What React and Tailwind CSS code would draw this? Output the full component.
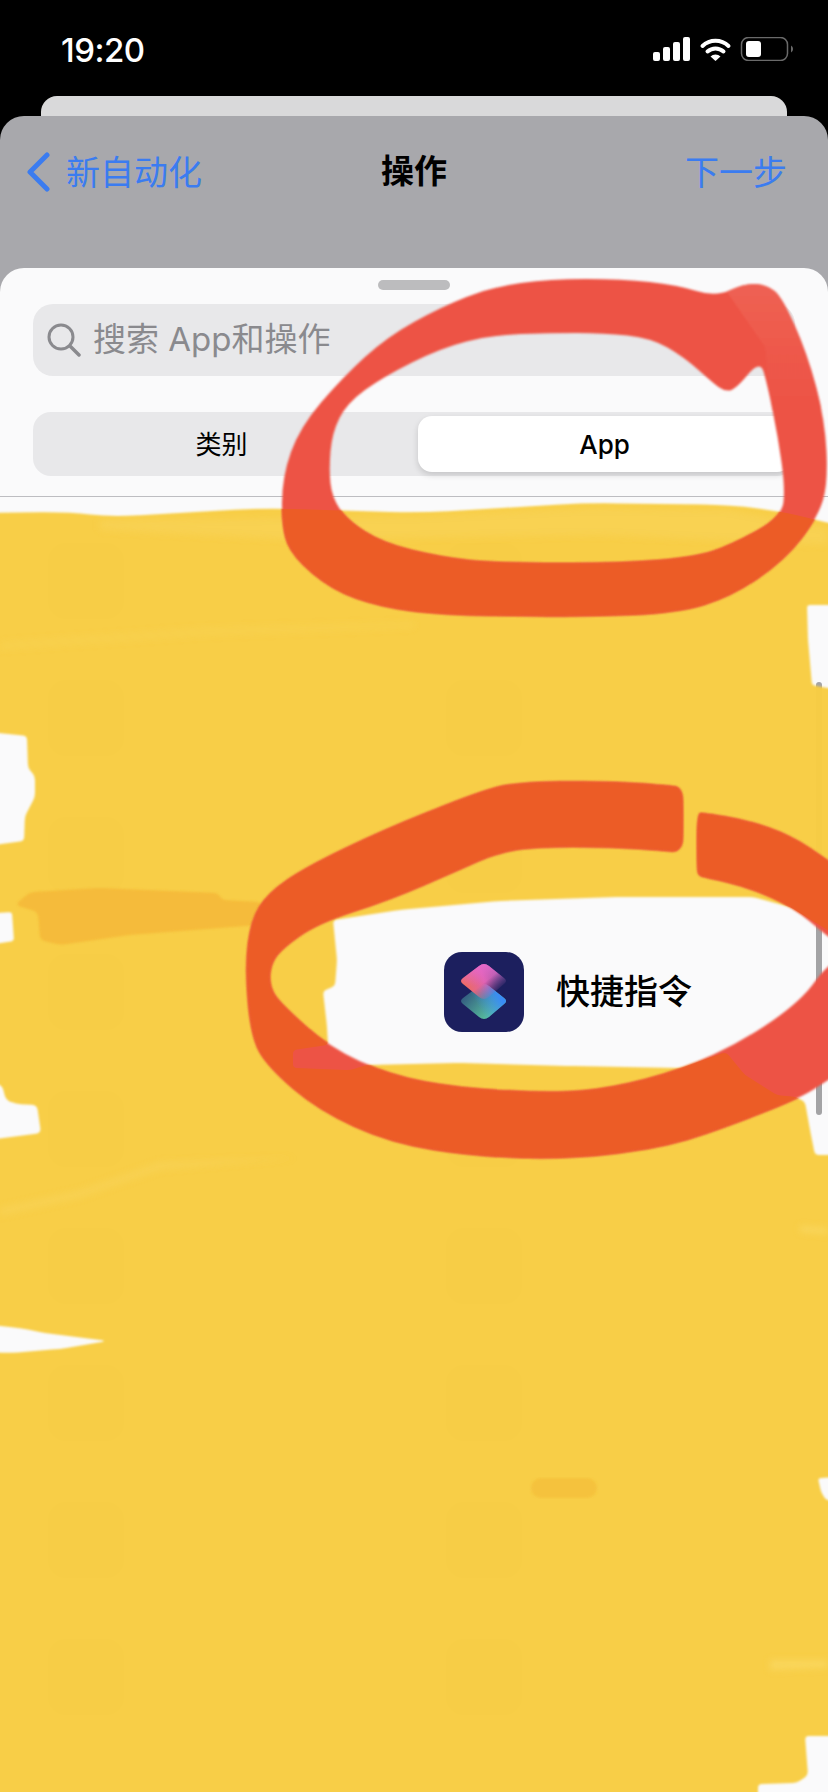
// rounded polygon through points, corner cut limited to r
function blob(points, r = 30) {
  const n = points.length;
  let d = '';
  points.forEach((p, i) => {
    const prev = points[(i - 1 + n) % n];
    const next = points[(i + 1) % n];
    const la = Math.hypot(prev[0] - p[0], prev[1] - p[1]);
    const lb = Math.hypot(next[0] - p[0], next[1] - p[1]);
    const ca = Math.min(r, la / 2) / la;
    const cb = Math.min(r, lb / 2) / lb;
    const a = [p[0] + (prev[0] - p[0]) * ca, p[1] + (prev[1] - p[1]) * ca];
    const b = [p[0] + (next[0] - p[0]) * cb, p[1] + (next[1] - p[1]) * cb];
    d += `${i === 0 ? 'M' : 'L'}${a[0].toFixed(1)} ${a[1].toFixed(1)}Q${p[0]} ${p[1]} ${b[0].toFixed(1)} ${b[1].toFixed(1)}`;
  });
  return d + 'Z';
}

const yellowPath = [
  blob([[-30, 513], [69, 512], [111, 517], [264, 508], [419, 513], [586, 503], [731, 505], [785, 512], [828, 523], [860, 530], [860, 1830], [-30, 1830]], 30),
  // holes where the sheet shows through
  blob([[-20, 731], [27, 736], [28, 768], [35, 776], [35, 797], [25, 816], [24, 841], [-20, 847]], 4),
  blob([[-20, 914], [12, 912], [14, 941], [-20, 946]], 3),
  blob([[-20, 1080], [2, 1085], [6, 1100], [16, 1104], [37, 1105], [41, 1133], [-20, 1141]], 5),
  blob([[-20, 1324], [20, 1328], [45, 1333], [108, 1341], [60, 1349], [10, 1353], [-20, 1352]], 8),
  blob([[807, 605], [850, 605], [850, 692], [822, 687], [812, 685], [808, 640]], 3),
  blob([[333, 920], [400, 910], [497, 901], [620, 897], [753, 897], [790, 907], [860, 950], [860, 1155], [815, 1155], [810, 1130], [805, 1102], [796, 1097], [777, 1095], [745, 1075], [726, 1052], [680, 1068], [570, 1066], [459, 1063], [367, 1065], [350, 1070], [293, 1068], [293, 1050], [328, 1045], [327, 1027], [323, 991], [335, 986], [337, 960]], 4),
  blob([[818, 1478], [860, 1476], [860, 1505], [826, 1500], [821, 1492]], 3),
  blob([[805, 1736], [860, 1736], [860, 1830], [758, 1830], [758, 1784], [797, 1783], [808, 1775]], 4),
].join(' ');

const ringTop = [
  blob([[282, 477], [282, 530], [293, 557], [332, 590], [380, 607], [441, 615], [586, 617], [677, 613], [731, 597], [785, 560], [818, 517], [828, 483], [825, 420], [807, 353], [782, 297], [767, 285], [745, 283], [716, 297], [677, 285], [622, 279], [550, 279], [492, 287], [441, 307], [387, 337], [343, 377], [300, 427]], 50),
  blob([[329, 470], [332, 497], [347, 520], [383, 543], [441, 557], [495, 563], [622, 563], [695, 557], [731, 545], [782, 517], [785, 487], [778, 437], [767, 383], [760, 360], [735, 390], [724, 391], [713, 383], [684, 357], [651, 338], [604, 333], [550, 333], [492, 335], [441, 348], [383, 377], [347, 403], [332, 433]], 50),
].join(' ');

const ringBottom = [
  blob([[674, 786], [611, 781], [516, 782], [478, 792], [383, 830], [306, 867], [268, 893], [251, 920], [245, 967], [251, 1037], [268, 1067], [318, 1110], [390, 1143], [478, 1157], [573, 1159], [669, 1147], [745, 1120], [802, 1097], [828, 1080], [860, 1060], [860, 950], [828, 963], [802, 1000], [745, 1040], [680, 1070], [611, 1088], [554, 1093], [459, 1088], [390, 1075], [329, 1047], [280, 1003], [270, 987], [270, 967], [280, 950], [318, 923], [390, 900], [459, 870], [497, 853], [535, 847], [611, 847], [668, 851], [676, 852], [682, 846], [683, 838], [683, 800], [682, 792], [678, 787]], 45),
  blob([[697, 813], [704, 813], [747, 820], [790, 835], [828, 860], [860, 885], [860, 960], [828, 937], [793, 907], [747, 887], [704, 877], [699, 876], [697, 870]], 40),
].join(' ');

const rows = [0, 1, 2, 3, 4, 5, 6, 7, 8];

function StatusIcons() {
  return (
    <svg width="141" height="24" viewBox="0 0 141 24">
      <rect x="0" y="15" width="7" height="9" rx="2" fill="#fff" />
      <rect x="10" y="10" width="7" height="14" rx="2" fill="#fff" />
      <rect x="20" y="5" width="7" height="19" rx="2" fill="#fff" />
      <rect x="30" y="0" width="7" height="24" rx="2" fill="#fff" />
      <path d="M49.5 9A19 19 0 0 1 75.5 9" fill="none" stroke="#fff" strokeWidth="4" strokeLinecap="round" />
      <path d="M54.5 14.5A12 12 0 0 1 70.5 14.5" fill="none" stroke="#fff" strokeWidth="4" strokeLinecap="round" />
      <path d="M62.5 24L57.5 19.5A7 7 0 0 1 67.5 19.5Z" fill="#fff" />
      <rect x="88.5" y="0.5" width="46" height="23" rx="7" fill="none" stroke="#6a6a6a" strokeWidth="1.5" />
      <rect x="93" y="4" width="15" height="16" rx="3" fill="#fff" />
      <path d="M138 8.5a4 4 0 0 1 0 7z" fill="#6a6a6a" />
    </svg>
  );
}

const diamondTop = 'M35 14Q40 10 45 14L60 26Q64 29 60 32L45 45Q40 49 35 45L19 32Q15 29 19 26Z';
const diamondBottom = 'M35 34Q40 30 45 34L60 46Q64 49 60 52L45 65Q40 69 35 65L19 52Q15 49 19 46Z';

function ShortcutsIcon() {
  return (
    <svg width="80" height="80" viewBox="0 0 80 80">
      <defs>
        <linearGradient id="topLayer" x1="20" y1="38" x2="62" y2="22" gradientUnits="userSpaceOnUse">
          <stop offset="0" stopColor="#ee6c58" />
          <stop offset="0.5" stopColor="#de62b0" />
          <stop offset="1" stopColor="#5f4d92" />
        </linearGradient>
        <linearGradient id="pinkTop" x1="40" y1="10" x2="40" y2="34" gradientUnits="userSpaceOnUse">
          <stop offset="0" stopColor="#e869cc" />
          <stop offset="1" stopColor="#e869cc" stopOpacity="0" />
        </linearGradient>
        <linearGradient id="fadeGrad" x1="34" y1="24" x2="50" y2="44" gradientUnits="userSpaceOnUse">
          <stop offset="0.35" stopColor="#fff" />
          <stop offset="1" stopColor="#000" />
        </linearGradient>
        <mask id="topFade">
          <rect width="80" height="80" fill="url(#fadeGrad)" />
        </mask>
        <linearGradient id="bottomLayer" x1="22" y1="40" x2="54" y2="68" gradientUnits="userSpaceOnUse">
          <stop offset="0" stopColor="#32597f" />
          <stop offset="1" stopColor="#62dba6" />
        </linearGradient>
        <linearGradient id="blueSide" x1="62" y1="44" x2="36" y2="58" gradientUnits="userSpaceOnUse">
          <stop offset="0.2" stopColor="#3a8cf5" />
          <stop offset="1" stopColor="#3a8cf5" stopOpacity="0" />
        </linearGradient>
      </defs>
      <path d={diamondBottom} fill="url(#bottomLayer)" />
      <path d={diamondBottom} fill="url(#blueSide)" />
      <g mask="url(#topFade)">
        <path d={diamondTop} fill="url(#topLayer)" />
        <path d={diamondTop} fill="url(#pinkTop)" />
      </g>
    </svg>
  );
}

// marker scribbles drawn over the screenshot
function Scribbles() {
  return (
    <svg className="absolute inset-0" width="828" height="1792" viewBox="0 0 828 1792">
      <defs>
        <clipPath id="yellowClip">
          <path d={yellowPath} clipRule="evenodd" />
        </clipPath>
        <clipPath id="topRingClip">
          <path d={ringTop} clipRule="evenodd" />
        </clipPath>
        <linearGradient id="tailFade" x1="0" y1="285" x2="0" y2="410" gradientUnits="userSpaceOnUse">
          <stop offset="0" stopColor="#ee6153" />
          <stop offset="1" stopColor="#ed5244" />
        </linearGradient>
        <filter id="soft" x="-5%" y="-5%" width="110%" height="110%">
          <feGaussianBlur stdDeviation="1.2" />
        </filter>
        <filter id="softer" x="-10%" y="-50%" width="120%" height="200%">
          <feGaussianBlur stdDeviation="3" />
        </filter>
      </defs>
      <g filter="url(#soft)">
        <path d={yellowPath} fill="#f8cd43" fillOpacity="0.98" fillRule="evenodd" />
      </g>
      <g clipPath="url(#yellowClip)">
        <g filter="url(#softer)" fill="#f9d65c">
          <path d="M100 520L420 516L590 508L730 510L828 528L828 545L600 535L300 540L100 530Z" opacity="0.5" />
          <path d="M0 642L200 628L414 622L414 628L200 636L0 650Z" opacity="0.3" />
          <path d="M0 1208L80 1190L160 1162L295 1158L160 1170L80 1198L0 1216Z" opacity="0.5" />
          <path d="M800 1226L828 1228L828 1234L800 1232Z" />
          <path d="M770 1660L828 1660L828 1668L770 1670Z" />
        </g>
        <path d={blob([[15, 905], [30, 892], [100, 888], [218, 893], [222, 900], [262, 902], [258, 925], [130, 935], [60, 945], [40, 940], [38, 912]], 6)} fill="#f5bb3a" filter="url(#soft)" />
        <rect x="531" y="1478" width="66" height="20" rx="10" fill="#f5c23e" filter="url(#soft)" />
      </g>
      <g filter="url(#soft)">
        <path d={ringBottom} fill="#ed5244" fillRule="evenodd" />
        <path d={ringTop} fill="#ed5244" fillRule="evenodd" />
        {/* the lighter tail of the top stroke, under the dark tip */}
        <g clipPath="url(#topRingClip)">
          <path d="M712 270L830 270L840 410L772 410L765 347Z" fill="url(#tailFade)" />
        </g>
      </g>
      <g clipPath="url(#yellowClip)">
        <g filter="url(#soft)">
          <path d={ringBottom} fill="#ec5c28" fillRule="evenodd" />
          <path d={ringTop} fill="#ec5c28" fillRule="evenodd" />
        </g>
      </g>
    </svg>
  );
}

export default function App() {
  return (
    <div className="relative flex h-[1792px] w-[828px] flex-col overflow-hidden bg-black font-['Inter','Noto_Sans_CJK_SC',sans-serif]">
      {/* Status bar */}
      <div className="flex h-[96px] items-start justify-between pl-[61px] pr-[34px] pt-[37px]">
        <span className="text-[33px] font-medium leading-[26px] tracking-[-0.5px] text-white">19:20</span>
        <StatusIcons />
      </div>

      {/* Card behind */}
      <div className="mx-[41px] h-[20px] rounded-t-[16px] bg-[#d9d9da]" />

      {/* Modal */}
      <div className="flex flex-1 flex-col rounded-t-[24px] bg-[#a8a8ac]">
        <div className="grid h-[112px] grid-cols-3 items-center px-[26px]">
          <div className="flex items-center gap-[16px] text-[34px] text-[#3b7cf0]">
            <svg width="24" height="40" viewBox="0 0 24 40">
              <path d="M21 3L4 20L21 37" fill="none" stroke="#3b7cf0" strokeWidth="5" strokeLinecap="round" strokeLinejoin="round" />
            </svg>
            <span>新自动化</span>
          </div>
          <div className="text-center text-[33px] font-semibold text-black">操作</div>
          <div className="pr-[15px] text-right text-[34px] text-[#3b7cf0]">下一步</div>
        </div>

        {/* Action sheet */}
        <div className="relative mt-[40px] flex flex-1 flex-col rounded-t-[24px] bg-[#fafafb]">
          <div className="mx-auto mt-[12px] h-[10px] w-[72px] rounded-full bg-[#bcbcbe]" />

          <div className="mx-[33px] mt-[14px] flex h-[72px] items-center gap-[12px] rounded-[20px] bg-[#e8e8ea] pl-[14px]">
            <svg width="34" height="34" viewBox="0 0 34 34">
              <circle cx="14" cy="14" r="12" fill="none" stroke="#8a8a8e" strokeWidth="3" />
              <path d="M23 23L32 32" stroke="#8a8a8e" strokeWidth="3.5" strokeLinecap="round" />
            </svg>
            <span className="text-[33px] text-[#8a8a8e]">搜索 App和操作</span>
          </div>

          <div className="mx-[33px] mt-[36px] grid h-[64px] grid-cols-2 gap-[8px] rounded-[18px] bg-[#e8e8ea] p-[4px]">
            <div className="flex items-center justify-center pr-[4px] text-[26px] text-black">类别</div>
            <div className="flex items-center justify-center rounded-[14px] bg-white text-[26px] font-medium text-black shadow-[0_3px_6px_rgba(0,0,0,0.15)]">App</div>
          </div>

          <div className="mt-[20px] h-px bg-[#bdbdc1]" />

          {/* App list */}
          <div className="grid grid-cols-2 pt-[15px]">
            {rows.map((row) => (
              <div key={row} className="contents">
                <div className="flex h-[137px] items-center pl-[48px]">
                  <div className="h-[76px] w-[76px] rounded-[18px] bg-[#d2d2d6]" />
                </div>
                {row === 3 ? (
                  <div className="flex h-[137px] items-center gap-[32px] pl-[30px]">
                    <div className="h-[80px] w-[80px] rounded-[18px] bg-[#1c1f5e]">
                      <ShortcutsIcon />
                    </div>
                    <span className="text-[34px] font-medium text-black">快捷指令</span>
                  </div>
                ) : (
                  <div className="flex h-[137px] items-center pl-[32px]">
                    <div className="h-[76px] w-[76px] rounded-[18px] bg-[#d2d2d6]" />
                  </div>
                )}
              </div>
            ))}
          </div>
        </div>
      </div>

      {/* Scroll indicator */}
      <div className="absolute left-[816px] top-[682px] h-[433px] w-[6px] rounded-full bg-[#a3a3a5]" />

      <Scribbles />
    </div>
  );
}
